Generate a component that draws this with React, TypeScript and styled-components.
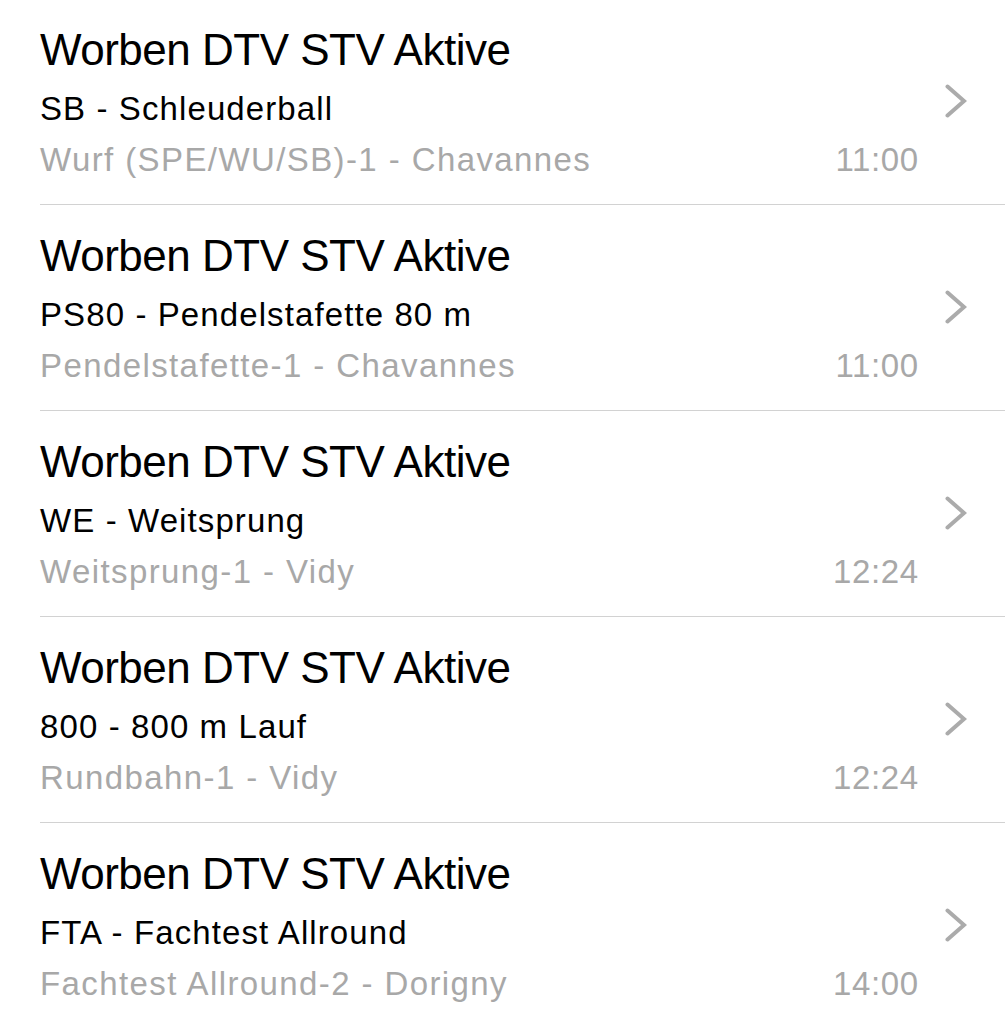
import styled, {createGlobalStyle} from "styled-components";

const GlobalStyle = createGlobalStyle`
    html, body {
        margin: 0;
        padding: 0;
        background: #ffffff;
    }
    body {
        font-family: "Liberation Sans", Arial, Helvetica, sans-serif;
        -webkit-font-smoothing: antialiased;
    }
`

const List = styled.ul`
    list-style: none;
    margin: 0;
    padding: 0;
    background: #ffffff;
`

const Row = styled.li`
    display: flex;
    align-items: center;
    padding: 25px 38px 26px 40px;
    height: 155px;
    position: relative;

    // separator inset like a table view cell
    &::after {
        content: '';
        position: absolute;
        left: 40px;
        right: 0;
        bottom: 1px;
        height: 1px;
        background: #d2d2d2;
    }
`

const Content = styled.div`
    flex: 1;
    min-width: 0;
    display: flex;
    flex-direction: column;
`

const Title = styled.div`
    font-size: 44px;
    line-height: 50px;
    letter-spacing: -0.5px;
    color: #000000;
    white-space: nowrap;
`

const Subtitle = styled.div`
    margin-top: 14px;
    font-size: 33px;
    line-height: 40px;
    letter-spacing: 1.1px;
    color: #000000;
    white-space: nowrap;
`

const Detail = styled.div`
    margin-top: 11px;
    display: flex;
    justify-content: space-between;
    align-items: baseline;
    font-size: 33px;
    line-height: 40px;
    color: #a8a8a8;
    white-space: nowrap;
`

const Place = styled.span`
    letter-spacing: 1.4px;
`

const Time = styled.span`
    letter-spacing: 0.6px;
    margin-right: -0.6px;
`

const Chevron = styled.svg`
    flex: none;
    width: 22px;
    height: 34px;
    margin-left: 27px;
    margin-top: -3px;
`

type Entry = {
    team: string
    discipline: string
    place: string
    time: string
}

const entries: Entry[] = [
    {team: 'Worben DTV STV Aktive', discipline: 'SB - Schleuderball', place: 'Wurf (SPE/WU/SB)-1 - Chavannes', time: '11:00'},
    {team: 'Worben DTV STV Aktive', discipline: 'PS80 - Pendelstafette 80 m', place: 'Pendelstafette-1 - Chavannes', time: '11:00'},
    {team: 'Worben DTV STV Aktive', discipline: 'WE - Weitsprung', place: 'Weitsprung-1 - Vidy', time: '12:24'},
    {team: 'Worben DTV STV Aktive', discipline: '800 - 800 m Lauf', place: 'Rundbahn-1 - Vidy', time: '12:24'},
    {team: 'Worben DTV STV Aktive', discipline: 'FTA - Fachtest Allround', place: 'Fachtest Allround-2 - Dorigny', time: '14:00'},
]

const App = () => {
    return (<>
        <GlobalStyle/>
        <List>
            {entries.map((e, i) => (
                <Row key={i}>
                    <Content>
                        <Title>{e.team}</Title>
                        <Subtitle>{e.discipline}</Subtitle>
                        <Detail>
                            <Place>{e.place}</Place>
                            <Time>{e.time}</Time>
                        </Detail>
                    </Content>
                    <Chevron viewBox={'0 0 22 34'}>
                        <polyline points={'2.5,2.5 19,17 2.5,31.5'} fill={'none'} stroke={'#ababab'}
                                  strokeWidth={4} strokeLinecap={'round'} strokeLinejoin={'miter'}/>
                    </Chevron>
                </Row>
            ))}
        </List>
    </>)
}

export default App
